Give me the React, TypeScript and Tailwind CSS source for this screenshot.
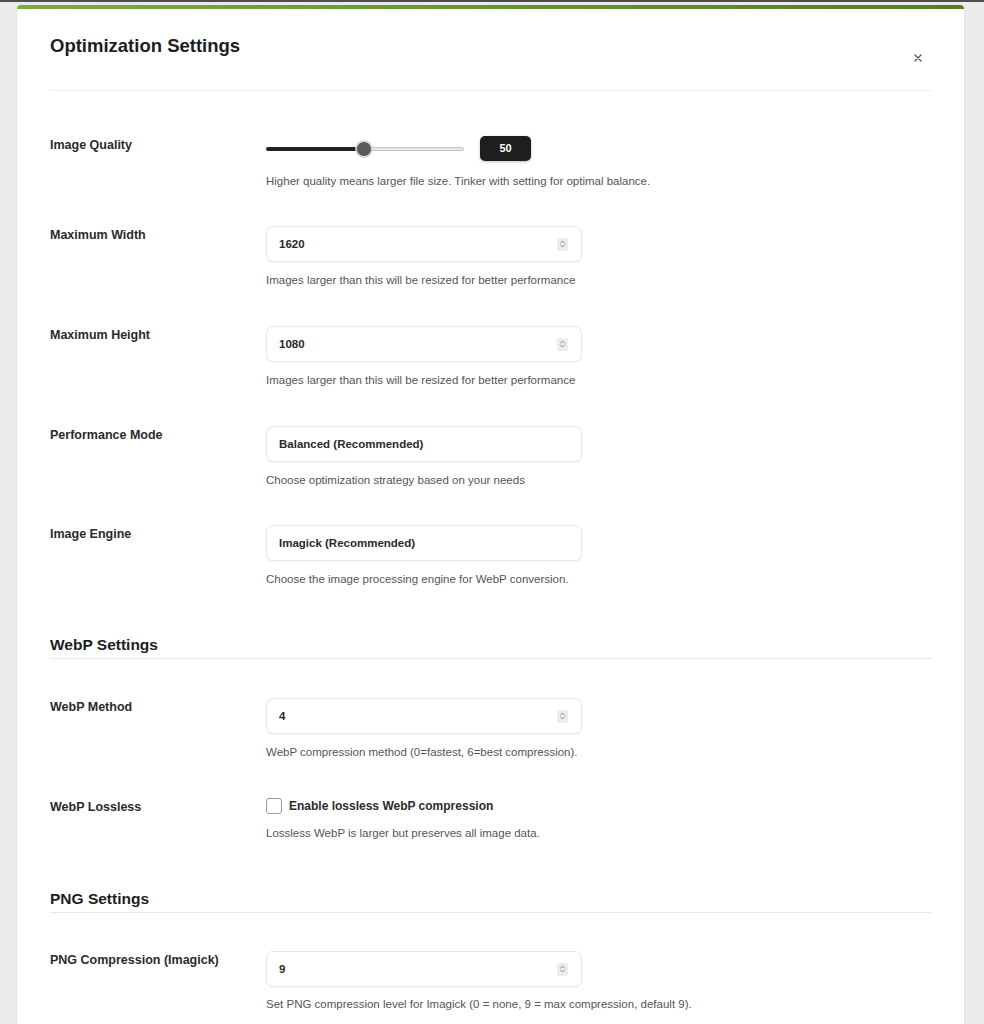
import React from "react";

const Spinner = () => (
  <span className="flex h-[13px] w-[11px] items-center justify-center rounded-[2px] bg-[#ededed]">
    <svg width="7" height="10" viewBox="0 0 7 10" fill="none" stroke="#8a8a8a" strokeWidth="1" strokeLinecap="round" strokeLinejoin="round">
      <path d="M1.5 4 L3.5 2 L5.5 4" />
      <path d="M1.5 6 L3.5 8 L5.5 6" />
    </svg>
  </span>
);

function Field({ value, spinner }: { value: string; spinner?: boolean }) {
  return (
    <div className="flex h-[36px] w-[316px] items-center justify-between rounded-[7px] border border-[#e7e7e7] bg-white pl-[12px] pr-[13px] shadow-[0_1px_2px_rgba(0,0,0,0.05)]">
      <span className="text-[11.5px] font-bold leading-[14px] text-[#2a2a2a]">{value}</span>
      {spinner && <Spinner />}
    </div>
  );
}

function Row({ label, children, className }: { label: string; children: React.ReactNode; className: string }) {
  return (
    <div className={"flex items-start " + className}>
      <div className="w-[216px] shrink-0 pt-[1px] text-[12.5px] font-bold leading-[16px] text-[#2b2b2b]">{label}</div>
      <div className="flex-1">{children}</div>
    </div>
  );
}

function Desc({ children, className }: { children: React.ReactNode; className: string }) {
  return <p className={"text-[11.5px] leading-[14px] text-[#555555] " + className}>{children}</p>;
}

export default function App() {
  return (
    <div className="min-h-screen border-t-2 border-[#4d4d4d] bg-[#ebebeb] pl-[17px] pr-[20px] pt-[3px] font-['Liberation_Sans',Arial,sans-serif]">
      <div className="overflow-hidden rounded-t-[4px] bg-white pb-[40px] shadow-[0_1px_3px_rgba(0,0,0,0.08)]">
        <div className="h-[4px] bg-gradient-to-r from-[#78ac3e] to-[#4f7d29]" />
        <div className="pl-[33px] pr-[32px]">
          <div className="flex h-[81px] items-start justify-between">
            <h1 className="pt-[25px] text-[18.5px] font-bold leading-[24px] text-[#1d1d1d]">Optimization Settings</h1>
            <button className="mt-[35px] flex h-[28px] w-[28px] items-center justify-center">
              <svg width="8" height="8" viewBox="0 0 8 8" stroke="#555" strokeWidth="1.3" strokeLinecap="round">
                <path d="M1 1 L7 7 M7 1 L1 7" />
              </svg>
            </button>
          </div>
          <div className="h-px bg-[#ededed]" />

          <Row label="Image Quality" className="mt-[45px]">
            <div className="flex h-[25px] items-center">
              <div className="relative h-[14px] w-[198px]">
                <div className="absolute left-0 top-[5px] h-[4px] w-[98px] rounded-l-full bg-[#222222]" />
                <div className="absolute right-0 top-[5px] h-[4px] w-[100px] rounded-r-full border border-[#c4c4c4] bg-[#e6e6e6]" />
                <div className="absolute left-[91px] top-0 h-[14px] w-[14px] rounded-full bg-[#5a5a5a] shadow-[0_0_0_2px_rgba(210,210,210,0.9)]" />
              </div>
              <div className="ml-[16px] flex h-[25px] w-[51px] items-center justify-center rounded-[5px] bg-[#1e1e1e] text-[11px] font-bold text-white shadow-[0_1px_3px_rgba(0,0,0,0.25)]">
                50
              </div>
            </div>
            <Desc className="mt-[13px]">Higher quality means larger file size. Tinker with setting for optimal balance.</Desc>
          </Row>

          <Row label="Maximum Width" className="mt-[38px]">
            <Field value="1620" spinner />
            <Desc className="mt-[11px]">Images larger than this will be resized for better performance</Desc>
          </Row>

          <Row label="Maximum Height" className="mt-[39px]">
            <Field value="1080" spinner />
            <Desc className="mt-[11px]">Images larger than this will be resized for better performance</Desc>
          </Row>

          <Row label="Performance Mode" className="mt-[39px]">
            <Field value="Balanced (Recommended)" />
            <Desc className="mt-[11px]">Choose optimization strategy based on your needs</Desc>
          </Row>

          <Row label="Image Engine" className="mt-[38px]">
            <Field value="Imagick (Recommended)" />
            <Desc className="mt-[11px]">Choose the image processing engine for WebP conversion.</Desc>
          </Row>

          <h2 className="mt-[49px] text-[15.5px] font-bold leading-[20px] text-[#1d1d1d]">WebP Settings</h2>
          <div className="mt-[3px] h-px bg-[#e8e8e8]" />

          <Row label="WebP Method" className="mt-[39px]">
            <Field value="4" spinner />
            <Desc className="mt-[11px]">WebP compression method (0=fastest, 6=best compression).</Desc>
          </Row>

          <Row label="WebP Lossless" className="mt-[39px]">
            <label className="flex h-[16px] items-center">
              <span className="h-[16px] w-[16px] rounded-[3px] border border-[#9a9a9a] bg-white" />
              <span className="ml-[7px] text-[12px] font-bold leading-[16px] text-[#2b2b2b]">Enable lossless WebP compression</span>
            </label>
            <Desc className="mt-[12px]">Lossless WebP is larger but preserves all image data.</Desc>
          </Row>

          <h2 className="mt-[49px] text-[15.5px] font-bold leading-[20px] text-[#1d1d1d]">PNG Settings</h2>
          <div className="mt-[3px] h-px bg-[#e8e8e8]" />

          <Row label="PNG Compression (Imagick)" className="mt-[38px]">
            <Field value="9" spinner />
            <Desc className="mt-[10px]">Set PNG compression level for Imagick (0 = none, 9 = max compression, default 9).</Desc>
          </Row>
        </div>
      </div>
    </div>
  );
}
